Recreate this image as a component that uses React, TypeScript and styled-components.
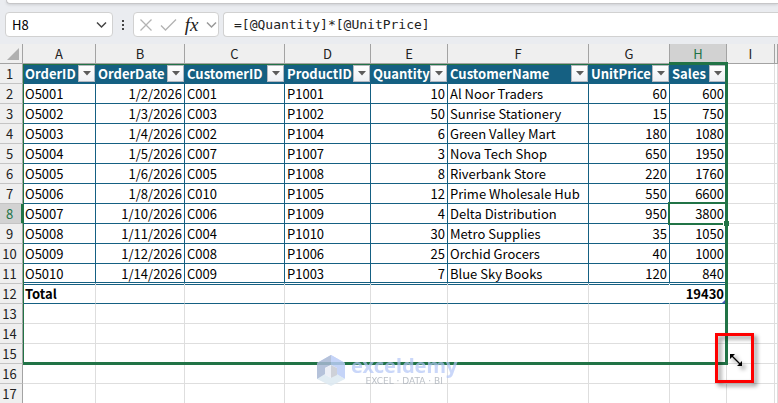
import React from 'react';
import styled, { createGlobalStyle, css } from 'styled-components';

const navy = '#156082';
const green = '#217346';
const grid = '#dedede';
const headLine = '#a3a3a3';
const sans = '"Noto Sans CJK SC", "Noto Sans", sans-serif';

const GlobalStyle = createGlobalStyle`
  *, *::before, *::after { box-sizing: border-box; }
  body { margin: 0; background: #fff; font-family: ${sans}; color: #000; overflow: hidden; }
  button, input { font: inherit; color: inherit; margin: 0; padding: 0; border: 0; background: none; border-radius: 0; }
`;

const App = styled.main`
  display: flex;
  flex-direction: column;
`;

const RibbonArea = styled.header`
  background: #eaecf0;
  padding-bottom: 7px;
`;

const RibbonEdge = styled.div`
  height: 4px;
  margin-left: 6px;
  background: #fff;
  border: solid #c6c6c8;
  border-width: 0 0 1px 1px;
  border-bottom-left-radius: 4px;
  box-shadow: 0 1px 3px rgba(0, 0, 0, 0.12);
`;

const FormulaBar = styled.div`
  display: flex;
  align-items: center;
  padding: 8px 0 0 5px;
`;

const Field = styled.div`
  display: flex;
  align-items: center;
  height: 25px;
  background: #fff;
  border: 1px solid #d1d1d1;
  border-radius: 4px;
`;

const NameBox = styled(Field)`
  width: 108px;
  padding: 0 5px 0 6px;
`;

const NameInput = styled.input`
  flex: 1;
  min-width: 0;
  font-size: 13px;
  outline: none;
`;

const IconButton = styled.button`
  display: flex;
  align-items: center;
  justify-content: center;
`;

const Dots = styled.div`
  display: grid;
  gap: 2px;
  width: 20px;
  justify-content: center;
`;

const Dot = styled.span`
  width: 2px;
  height: 2px;
  background: #444;
`;

const FormulaTools = styled(Field)`
  width: 86px;
  justify-content: space-between;
  padding: 0 1px 0 5px;
`;

const FxLabel = styled.span`
  font: italic 19px/20px "Liberation Serif", serif;
  color: #222;
`;

const FormulaField = styled(Field)`
  flex: 1;
  margin-left: 4px;
  padding-left: 10px;
  border-right: 0;
  border-radius: 4px 0 0 4px;
`;

const FormulaInput = styled.input`
  width: 100%;
  font: 13px "DejaVu Sans Mono", monospace;
  color: #222;
  outline: none;
`;

const Sheet = styled.section`
  position: relative;
`;

const Grid = styled.table`
  width: 100%;
  table-layout: fixed;
  border-collapse: separate;
  border-spacing: 0;
  font-size: 13px;
  line-height: 19px;
`;

const Col = styled.col<{ $w?: number }>`
  width: ${p => (p.$w ? `${p.$w}px` : 'auto')};
`;

const Corner = styled.td`
  height: 20px;
  padding: 4px 3px 3px 7px;
  line-height: 0;
  background: #efefef;
  border: solid ${headLine};
  border-width: 0 1px 1px 0;
`;

const ColHead = styled.th<{ $active: boolean }>`
  height: 20px;
  padding: 0;
  font-weight: 400;
  color: ${p => (p.$active ? green : '#222')};
  background: ${p => (p.$active ? '#d2d2d2' : '#efefef')};
  border: solid ${headLine};
  border-width: 0 1px 1px 0;
  ${p => p.$active && css`box-shadow: inset 0 -1px ${green}; border-bottom-color: ${green};`}
`;

const RowHead = styled.th<{ $active: boolean }>`
  height: 20px;
  padding: 0 3px 0 0;
  font-weight: 400;
  color: ${p => (p.$active ? green : '#222')};
  background: ${p => (p.$active ? '#d2d2d2' : '#efefef')};
  border-right: 1px solid ${headLine};
  border-bottom: 1px solid #c4c4c4;
  ${p => p.$active && css`box-shadow: inset -1px 0 ${green}; border-right-color: ${green};`}
`;

type Kind = 'plain' | 'body' | 'last' | 'total';

const Cell = styled.td<{ $kind: Kind; $right?: boolean; $open?: boolean }>`
  position: relative;
  height: 20px;
  padding: 0 2px;
  white-space: nowrap;
  text-align: ${p => (p.$right ? 'right' : 'left')};
  border: solid ${grid};
  border-width: 0 1px 1px 0;
  ${p => p.$kind === 'body' && css`border-color: ${navy};`}
  ${p => p.$kind === 'last' && css`
    border-color: ${navy};
    border-bottom-color: #fff;
    box-shadow: inset 0 -1px ${navy};
  `}
  ${p => p.$kind === 'total' && css`
    font-weight: 700;
    border-bottom-color: ${navy};
    box-shadow: inset 0 1px ${navy};
  `}
  ${p => p.$open && css`border-right-color: #fff;`}
`;

const FieldHead = styled.th`
  height: 20px;
  padding: 0 0 0 2px;
  color: #fff;
  background: ${navy};
  border: solid ${navy};
  border-width: 0 1px 1px 0;
`;

const FieldHeadInner = styled.div`
  display: flex;
  align-items: center;
  justify-content: space-between;
  height: 19px;
  white-space: nowrap;
`;

const FilterButton = styled(IconButton)`
  flex: none;
  width: 17px;
  height: 17px;
  background: linear-gradient(#fff, #eef0f4);
  border: 1px solid #b4b8c0;
`;

const ActiveFrame = styled.span`
  position: absolute;
  z-index: 2;
  inset: -2px 0 -2px -2px;
  border: 2px solid ${green};
  border-right: 0;
`;

const FillHandle = styled.span`
  position: absolute;
  z-index: 3;
  right: -3px;
  bottom: -3px;
  width: 5px;
  height: 5px;
  background: ${green};
  box-shadow: -1px 0 #fff;
`;

const TableCorner = styled.span`
  position: absolute;
  right: 0;
  bottom: 0;
  width: 4px;
  height: 4px;
  background: #4a55b8;
  clip-path: polygon(100% 0, 100% 100%, 0 100%);
`;

const ResizeOutline = styled.div`
  position: absolute;
  z-index: 1;
  top: 20px;
  left: 23px;
  width: 705px;
  height: 301px;
  border: solid ${green};
  border-width: 1px 3px 3px 1px;
  pointer-events: none;
`;

const ColumnMarker = styled.span`
  position: absolute;
  top: -3px;
  right: -3px;
  width: 59px;
  height: 3px;
  background: ${green};
`;

const Callout = styled.div`
  position: absolute;
  z-index: 4;
  right: -29px;
  bottom: -21px;
  width: 39px;
  height: 50px;
  display: flex;
  align-items: center;
  justify-content: center;
  border: 3px solid #fe0000;
  filter: drop-shadow(3px 3px 2px rgba(0, 0, 0, 0.45));
`;

const CursorIcon = styled.svg`
  margin: 4px 0 0 3px;
`;

const Watermark = styled.div`
  position: absolute;
  z-index: 2;
  top: 311px;
  left: 317px;
  display: flex;
  align-items: center;
  gap: 6px;
  opacity: 0.85;
`;

const Brand = styled.div`
  display: grid;
  justify-items: center;
`;

const BrandName = styled.span`
  font: bold 20px/20px "Noto Sans", sans-serif;
  color: rgba(178, 198, 246, 0.82);
`;

const BrandTag = styled.span`
  font: 9px/10px "DejaVu Sans", sans-serif;
  color: #aeb4bc;
  white-space: pre;
`;

const columns = [
  { letter: 'A', width: 73, field: 'OrderID' },
  { letter: 'B', width: 89, field: 'OrderDate', right: true },
  { letter: 'C', width: 100, field: 'CustomerID' },
  { letter: 'D', width: 86, field: 'ProductID' },
  { letter: 'E', width: 77, field: 'Quantity', right: true },
  { letter: 'F', width: 141, field: 'CustomerName' },
  { letter: 'G', width: 81, field: 'UnitPrice', right: true },
  { letter: 'H', width: 57, field: 'Sales', right: true },
];

const orders: (string | number)[][] = [
  ['O5001', '1/2/2026', 'C001', 'P1001', 10, 'Al Noor Traders', 60, 600],
  ['O5002', '1/3/2026', 'C003', 'P1002', 50, 'Sunrise Stationery', 15, 750],
  ['O5003', '1/4/2026', 'C002', 'P1004', 6, 'Green Valley Mart', 180, 1080],
  ['O5004', '1/5/2026', 'C007', 'P1007', 3, 'Nova Tech Shop', 650, 1950],
  ['O5005', '1/6/2026', 'C005', 'P1008', 8, 'Riverbank Store', 220, 1760],
  ['O5006', '1/8/2026', 'C010', 'P1005', 12, 'Prime Wholesale Hub', 550, 6600],
  ['O5007', '1/10/2026', 'C006', 'P1009', 4, 'Delta Distribution', 950, 3800],
  ['O5008', '1/11/2026', 'C004', 'P1010', 30, 'Metro Supplies', 35, 1050],
  ['O5009', '1/12/2026', 'C008', 'P1006', 25, 'Orchid Grocers', 40, 1000],
  ['O5010', '1/14/2026', 'C009', 'P1003', 7, 'Blue Sky Books', 120, 840],
];

const totals = ['Total', '', '', '', '', '', '', 19430];
const emptyRows = [13, 14, 15, 16, 17];

const Chevron = ({ color = '#444', size = 11 }: { color?: string; size?: number }) => (
  <svg width={size} height={size} viewBox="0 0 11 11" fill="none" stroke={color} strokeWidth="1.5">
    <path d="M1 3.5 5.5 8 10 3.5" />
  </svg>
);

const Spare = () => (
  <>
    <Cell $kind="plain" />
    <Cell $kind="plain" />
  </>
);

export default function Workbook() {
  return (
    <App>
      <GlobalStyle />
      <RibbonArea>
        <RibbonEdge />
        <FormulaBar>
          <NameBox>
            <NameInput aria-label="Name box" defaultValue="H8" />
            <IconButton aria-label="Open name list"><Chevron /></IconButton>
          </NameBox>
          <Dots><Dot /><Dot /><Dot /></Dots>
          <FormulaTools>
            <IconButton aria-label="Cancel">
              <svg width="14" height="14" viewBox="0 0 14 14" stroke="#b3b3b3" strokeWidth="1.3"><path d="M1.5 1.5 12.5 12.5M12.5 1.5 1.5 12.5" /></svg>
            </IconButton>
            <IconButton aria-label="Enter">
              <svg width="17" height="14" viewBox="0 0 17 14" fill="none" stroke="#b3b3b3" strokeWidth="1.3"><path d="M1 7.5 5.5 12 16 1.5" /></svg>
            </IconButton>
            <IconButton aria-label="Insert function"><FxLabel>fx</FxLabel></IconButton>
            <IconButton aria-label="Function list"><Chevron color="#999" /></IconButton>
          </FormulaTools>
          <FormulaField>
            <FormulaInput aria-label="Formula" defaultValue="=[@Quantity]*[@UnitPrice]" />
          </FormulaField>
        </FormulaBar>
      </RibbonArea>
      <Sheet>
        <Grid>
          <colgroup>
            <Col $w={23} />
            {columns.map(c => <Col key={c.letter} $w={c.width} />)}
            <Col $w={48} />
            <Col />
          </colgroup>
          <thead>
            <tr>
              <Corner>
                <svg width="12" height="12" viewBox="0 0 12 12"><path d="M12 0V12H0Z" fill="#b0b0b0" /></svg>
              </Corner>
              {columns.map(c => <ColHead key={c.letter} scope="col" $active={c.letter === 'H'}>{c.letter}</ColHead>)}
              <ColHead scope="col" $active={false}>I</ColHead>
              <ColHead scope="col" $active={false} aria-label="J" />
            </tr>
          </thead>
          <tbody>
            <tr>
              <RowHead scope="row" $active={false}>1</RowHead>
              {columns.map(c => (
                <FieldHead key={c.field}>
                  <FieldHeadInner>
                    {c.field}
                    <FilterButton aria-label={`Filter ${c.field}`}>
                      <svg width="8" height="5" viewBox="0 0 8 5"><path d="M0 0H8L4 4.5Z" fill="#5c5c5c" /></svg>
                    </FilterButton>
                  </FieldHeadInner>
                </FieldHead>
              ))}
              <Spare />
            </tr>
            {orders.map((order, r) => (
              <tr key={r}>
                <RowHead scope="row" $active={r === 6}>{r + 2}</RowHead>
                {order.map((value, c) => (
                  <Cell key={c} $kind={r === orders.length - 1 ? 'last' : 'body'} $right={columns[c].right}>
                    {value}
                    {r === 6 && c === 7 && <><ActiveFrame /><FillHandle /></>}
                  </Cell>
                ))}
                <Spare />
              </tr>
            ))}
            <tr>
              <RowHead scope="row" $active={false}>12</RowHead>
              {totals.map((value, c) => (
                <Cell key={c} $kind="total" $right={columns[c].right} $open={c === 6}>
                  {value}
                  {c === 7 && <TableCorner />}
                </Cell>
              ))}
              <Spare />
            </tr>
            {emptyRows.map(n => (
              <tr key={n}>
                <RowHead scope="row" $active={false}>{n}</RowHead>
                {columns.map(c => <Cell key={c.letter} $kind="plain" />)}
                <Spare />
              </tr>
            ))}
          </tbody>
        </Grid>
        <ResizeOutline>
          <ColumnMarker />
          <Callout>
            <CursorIcon width="12" height="12" viewBox="0 0 12 12">
              <path d="M0 0H5L0 5ZM12 12H7L12 7Z" />
              <path d="M2 2 10 10" stroke="#000" strokeWidth="1.3" />
            </CursorIcon>
          </Callout>
        </ResizeOutline>
        <Watermark>
          <svg width="28" height="31" viewBox="0 0 28 31">
            <path d="M14 0 28 8V16L19 11 14 9 7 13V23L0 24V8Z" fill="#b9cbf5" />
            <path d="M0 8 14 0V10L8 13V20L0 24Z" fill="#a9b8d4" />
            <path d="M28 8V24L20 20V13L14 10V0Z" fill="#bccdf7" />
            <path d="M0 24 8 19 14 23 20 19 28 24 14 31Z" fill="#dce9f2" />
            <path d="M14 10 20 13V20L14 23Z" fill="#c6cad2" />
            <path d="M14 10 8 13V20L14 23Z" fill="#e9edf5" />
          </svg>
          <Brand>
            <BrandName>exceldemy</BrandName>
            <BrandTag>EXCEL · DATA · BI</BrandTag>
          </Brand>
        </Watermark>
      </Sheet>
    </App>
  );
}
